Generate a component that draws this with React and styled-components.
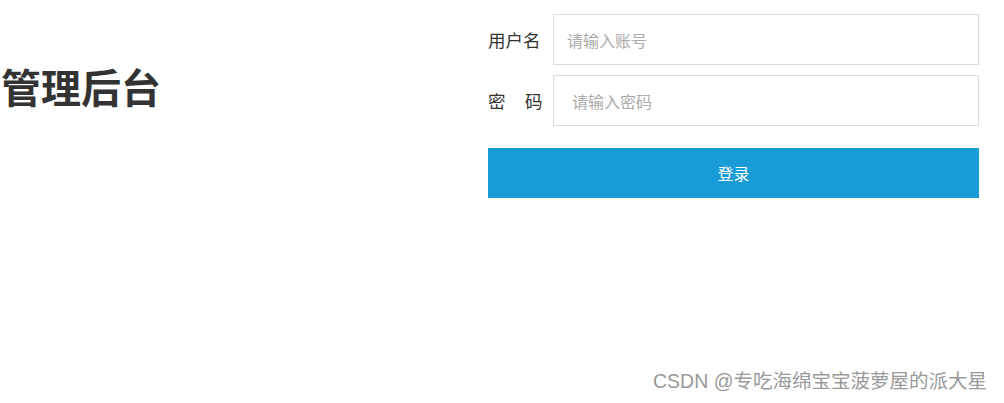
import React from 'react';
import styled, { createGlobalStyle } from 'styled-components';

const GlobalStyle = createGlobalStyle`
  html, body {
    margin: 0;
    padding: 0;
    background: #fff;
    font-family: "Noto Sans CJK SC", "Noto Sans", sans-serif;
  }
`;

const Page = styled.div`
  display: flex;
  flex-direction: column;
  height: 403px;
  box-sizing: border-box;
`;

const Main = styled.div`
  display: flex;
  flex-direction: row;
`;

const Side = styled.div`
  flex: 0 0 488px;
  padding-top: 59px;
`;

const Title = styled.h1`
  margin: 0;
  padding-left: 1px;
  font-size: 40px;
  line-height: 54px;
  font-weight: 700;
  color: #333;
`;

const Form = styled.form`
  width: 491px;
  padding-top: 14px;
  display: flex;
  flex-direction: column;
  gap: 10px;
`;

const Row = styled.div`
  display: flex;
  align-items: center;
`;

const Label = styled.label`
  flex: 0 0 65px;
  font-size: 17.5px;
  color: #333;
  white-space: pre;
  letter-spacing: ${p => p.$spread || 0}px;
`;

const Input = styled.input`
  flex: 1;
  height: 51px;
  box-sizing: border-box;
  border: 1px solid #dcdcdc;
  padding: 0 0 0 ${p => p.$pad}px;
  font-size: 16px;
  font-family: inherit;
  color: #333;
  outline: none;

  &::placeholder {
    color: #aaa;
  }
`;

const Button = styled.button`
  margin-top: 12px;
  height: 50px;
  border: none;
  background: #189bd6;
  color: #fff;
  font-size: 16px;
  font-family: inherit;
  cursor: pointer;
`;

const Watermark = styled.div`
  margin-top: auto;
  padding: 0 17px 9px 0;
  text-align: right;
  font-size: 19.5px;
  color: #9a9a9a;
  font-family: "Liberation Sans", "Noto Sans CJK SC", sans-serif;
`;

export default function App() {
  return (
    <Page>
      <GlobalStyle />
      <Main>
        <Side>
          <Title>管理后台</Title>
        </Side>
        <Form onSubmit={e => e.preventDefault()}>
          <Row>
            <Label>用户名</Label>
            <Input $pad={13} placeholder="请输入账号" />
          </Row>
          <Row>
            <Label $spread={1}>密　码</Label>
            <Input $pad={18} type="password" placeholder="请输入密码" />
          </Row>
          <Button type="submit">登录</Button>
        </Form>
      </Main>
      <Watermark>CSDN @专吃海绵宝宝菠萝屋的派大星</Watermark>
    </Page>
  );
}
